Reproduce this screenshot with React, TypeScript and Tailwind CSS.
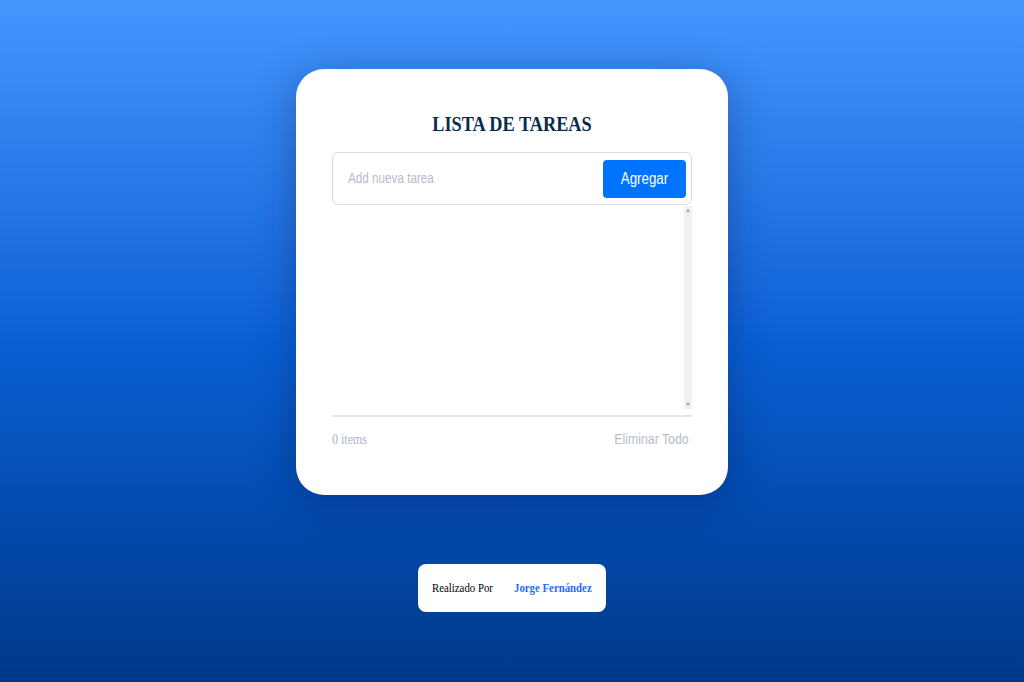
const App = () => {
  return (
    <div className="min-h-screen w-full bg-gradient-to-b from-[#4496ff] via-[#0a60d4] to-[#00388a] flex flex-col items-center pt-[69px]">
      {/* card */}
      <div className="w-[432px] h-[426px] bg-white rounded-[28px] shadow-[0_8px_40px_rgba(0,20,80,0.35)] pt-[38px] px-9 flex flex-col">
        <h1 className="text-center text-[22px] leading-[33px] font-bold text-[#0a2a4e] font-['Liberation_Serif',serif] mb-3 whitespace-nowrap">
          <span className="inline-block scale-x-[0.83]">LISTA DE TAREAS</span>
        </h1>

        <div className="h-[53px] border border-[#dcdcdc] rounded-md flex items-center justify-between pl-[15px] pr-[5px]">
          <input
            placeholder="Add nueva tarea"
            className="flex-1 min-w-0 origin-left scale-x-[0.78] outline-none text-[15px] text-[#333] placeholder:text-[#b4bccb] font-['Liberation_Sans',sans-serif] bg-transparent"
          />
          <button className="w-[83px] h-[38px] bg-[#0073ff] rounded-[4px] text-white text-[16px] font-['Liberation_Sans',sans-serif] whitespace-nowrap">
            <span className="inline-block scale-x-[0.83]">Agregar</span>
          </button>
        </div>

        {/* list area with scrollbar */}
        <div className="h-[205px] flex justify-end">
          <div className="w-2 h-[203px] mt-px bg-[#f1f1f1] flex flex-col items-center justify-between py-[3px]">
            <span className="w-0 h-0 border-x-[2px] border-x-transparent border-b-[3px] border-b-[#a3a3a3]" />
            <span className="w-0 h-0 border-x-[2px] border-x-transparent border-t-[3px] border-t-[#a3a3a3]" />
          </div>
        </div>

        <div className="h-[2px] bg-[#e6e6e6] mt-[5px]" />

        <div className="flex items-center justify-between mt-3 leading-[20px]">
          <span className="inline-block origin-left scale-x-[0.8] text-[15px] text-[#aab4c6] font-['Liberation_Serif',serif] whitespace-nowrap">0 items</span>
          <button className="text-[15px] text-[#b4bccb] font-['Liberation_Sans',sans-serif] whitespace-nowrap pr-[3px]">
            <span className="inline-block origin-right scale-x-[0.82]">Eliminar Todo</span>
          </button>
        </div>
      </div>

      {/* credit */}
      <div className="mt-[69px] w-[188px] h-[48px] bg-white rounded-lg flex items-center pl-[14px] font-['Liberation_Serif',serif] text-[13.5px] whitespace-nowrap overflow-hidden">
        <div className="w-[82px] shrink-0">
          <span className="inline-block origin-left scale-x-[0.8] text-black">Realizado Por</span>
        </div>
        <span className="inline-block shrink-0 origin-left scale-x-[0.8] text-[#1a6cff] font-bold">Jorge Fernández</span>
      </div>
    </div>
  );
};

export default App;
